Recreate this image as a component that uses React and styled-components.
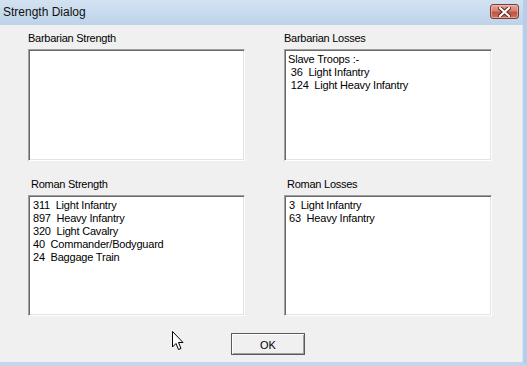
import React from 'react'
import styled, { createGlobalStyle } from 'styled-components'

const Global = createGlobalStyle`
  html, body {
    margin: 0;
    padding: 0;
    background: #f0f0f0;
  }
  body {
    font-family: "Liberation Sans", Arial, sans-serif;
  }
`

const Window = styled.div`
  position: relative;
  width: 527px;
  height: 366px;
  box-sizing: border-box;
  background: #f0f0f0;
  border-right: 4px solid #b4cfe9;
  border-bottom: 4px solid #c2d7ec;
  box-shadow: inset -1px 0 #d8e6f4;
  display: flex;
  flex-direction: column;
  overflow: hidden;
`

const TitleBar = styled.div`
  height: 25px;
  flex: none;
  display: flex;
  align-items: center;
  justify-content: space-between;
  padding: 0 4px 0 3px;
  background: linear-gradient(#d3e2f2, #bdd3ea);
`

const Title = styled.span`
  font-size: 12px;
  color: #111;
  margin-top: -1px;
`

const CloseButton = styled.div`
  width: 29px;
  height: 15px;
  margin-top: -2px;
  box-sizing: border-box;
  border: 1px solid #7a3b34;
  border-radius: 3px;
  background: linear-gradient(#e2a89c 0%, #d28474 45%, #c05444 55%, #cc7260 100%);
  box-shadow: inset 0 0 0 1px rgba(255, 210, 200, 0.5);
  display: flex;
  align-items: center;
  justify-content: center;
`

const Body = styled.div`
  flex: 1;
  padding: 7px 0 0 28px;
  display: flex;
  flex-direction: column;
`

const Grid = styled.div`
  display: grid;
  grid-template-columns: 217px 208px;
  column-gap: 39px;
  row-gap: 17px;
`

const Group = styled.div`
  display: flex;
  flex-direction: column;
`

const Label = styled.div`
  font-size: 11px;
  letter-spacing: -0.25px;
  line-height: 13px;
  height: 13px;
  margin: 0 0 4px ${p => p.$indent}px;
  color: #000;
`

const ListBox = styled.div`
  height: ${p => p.$h}px;
  box-sizing: border-box;
  background: #fff;
  border: 1px solid;
  border-color: #a0a0a0 #fff #fff #a0a0a0;
  box-shadow: inset 1px 1px #696969, inset -1px -1px #e3e3e3;
  padding: 3px 4px 3px ${p => p.$pad}px;
`

const Item = styled.div`
  font-size: 11px;
  letter-spacing: -0.2px;
  line-height: 13px;
  white-space: pre;
  color: #000;
`

const ButtonRow = styled.div`
  display: flex;
  padding: 17px 0 0 203px;
`

const Button = styled.div`
  width: 74px;
  height: 22px;
  box-sizing: border-box;
  border: 1px solid #5a5a5a;
  background: #f0f0f0;
  box-shadow: inset 1px 1px #fff, inset -1px -1px #a0a0a0;
  display: flex;
  align-items: center;
  justify-content: center;
  font-size: 11px;
  color: #000;
  padding-top: 1px;
`

// mouse pointer sitting over the dialog
const Cursor = styled.svg`
  position: absolute;
  left: 171px;
  top: 330px;
`

const panels = [
  { label: 'Barbarian Strength', indent: 0, pad: 4, h: 112, items: [] },
  {
    label: 'Barbarian Losses',
    indent: 0,
    pad: 3,
    h: 112,
    items: ['Slave Troops :-', ' 36  Light Infantry', ' 124  Light Heavy Infantry'],
  },
  {
    label: 'Roman Strength',
    indent: 3,
    pad: 4,
    h: 121,
    items: [
      '311  Light Infantry',
      '897  Heavy Infantry',
      '320  Light Cavalry',
      '40  Commander/Bodyguard',
      '24  Baggage Train',
    ],
  },
  { label: 'Roman Losses', indent: 3, pad: 4, h: 121, items: ['3  Light Infantry', '63  Heavy Infantry'] },
]

const App = () => {
  return (
    <>
      <Global />
      <Window>
        <TitleBar>
          <Title>Strength Dialog</Title>
          <CloseButton>
            <svg width="13" height="10" viewBox="0 0 13 10">
              <path d="M2 1 L11 9 M11 1 L2 9" stroke="#5a1e18" strokeWidth="4" strokeLinecap="square" />
              <path d="M2 1 L11 9 M11 1 L2 9" stroke="#fff" strokeWidth="2.2" strokeLinecap="square" />
            </svg>
          </CloseButton>
        </TitleBar>
        <Body>
          <Grid>
            {panels.map(p => (
              <Group key={p.label}>
                <Label $indent={p.indent}>{p.label}</Label>
                <ListBox $h={p.h} $pad={p.pad}>
                  {p.items.map((t, i) => (
                    <Item key={i}>{t}</Item>
                  ))}
                </ListBox>
              </Group>
            ))}
          </Grid>
          <ButtonRow>
            <Button>OK</Button>
          </ButtonRow>
        </Body>
        <Cursor width="14" height="22" viewBox="0 0 14 22">
          <path d="M1.5 1.5 L1.5 17 L5 13.5 L7.5 19.5 L10 18.5 L7.5 12.5 L12 12.5 Z" fill="#fff" stroke="#000" strokeWidth="1" strokeLinejoin="miter" />
        </Cursor>
      </Window>
    </>
  )
}

export default App
